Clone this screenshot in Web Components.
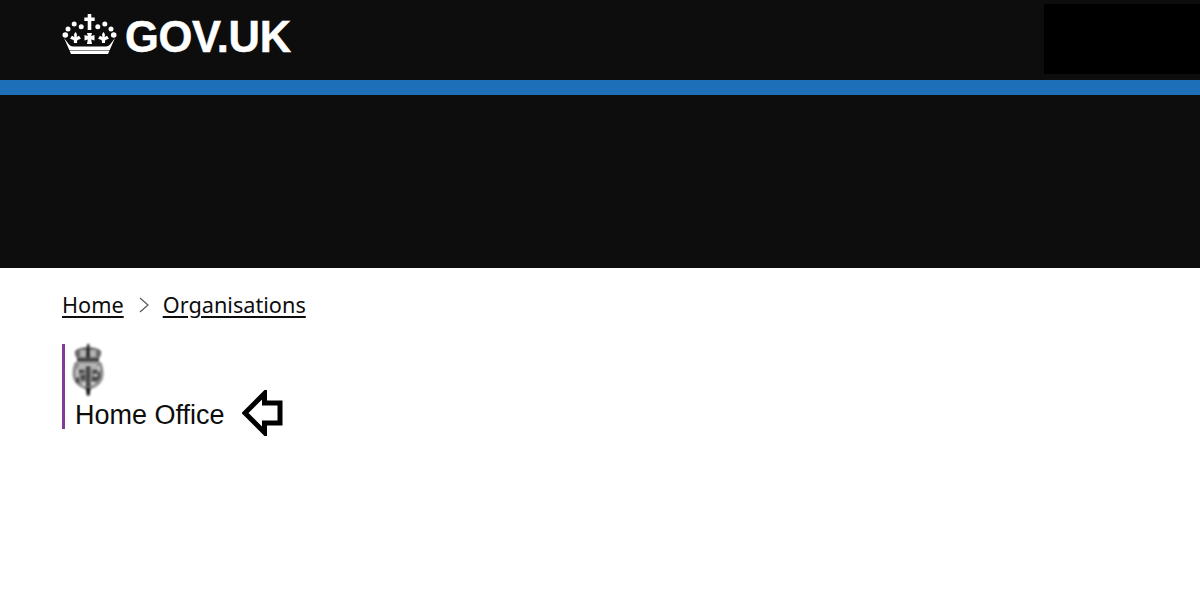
<!DOCTYPE html>
<html lang="en">
<head>
<meta charset="utf-8">
<title>Home Office - GOV.UK</title>
<style>
    html, body { margin: 0; padding: 0; background: #fff; }
</style>
</head>
<body>
<gov-header>GOV.UK</gov-header>
<gov-hero></gov-hero>
<gov-page>
    <gov-breadcrumbs>
        <a href="#">Home</a>
        <a href="#">Organisations</a>
    </gov-breadcrumbs>
    <org-logo>Home Office</org-logo>
</gov-page>

<script>
define();

function define() {
    class GovHeader extends HTMLElement {
        constructor() {
            super();
            var shadow = this.attachShadow({mode: 'open'});
            shadow.innerHTML = `
            <style>
                :host {
                    display: flex;
                    justify-content: space-between;
                    height: 80px;
                    box-sizing: border-box;
                    padding: 4px 0 6px 62px;
                    background: #0d0d0d;
                    color: #fff;
                }
                .logo { display: flex; align-items: flex-start; gap: 8px; padding-top: 10px; }
                svg { display: block; width: 55px; height: 40px; }
                .name {
                    font: bold 43.500px/46px "Liberation Sans", Arial, sans-serif;
                    letter-spacing: -0.3px;
                    -webkit-text-stroke: 0.5px #fff;
                }
                .blackout { width: 156px; background: #000; }
            </style>
            <div class="logo">
                <svg viewBox="0 0 54 40" fill="#fff" aria-hidden="true">
                    <circle cx="2.800" cy="21" r="2.800"/><circle cx="5.500" cy="15" r="2.500"/>
                    <circle cx="11.700" cy="10" r="2.500"/><circle cx="18.700" cy="12.800" r="2.500"/>
                    <circle cx="35.300" cy="12.800" r="2.500"/><circle cx="42.300" cy="10" r="2.500"/>
                    <circle cx="48.500" cy="15" r="2.500"/><circle cx="51.200" cy="21" r="2.800"/>
                    <path d="M25.200 0h3.600v3.400h3.400v3.600h-3.400v9h-3.600V7h-3.400V3.400h3.400z"/>
                    <path d="M24.500 19h5l-.8 3 3.300-1v5.500l-3.300-1 .8 4.500h-5l.8-4.500-3.300 1V21l3.300 1z"/>
                    <path d="M13 18c1.600 1.500 1.800 3.200 1 5l2.600-1.200 1.800 3-3.300 1.300c-.5.400-.7 1.500-.5 3h-3.200c.2-1.500 0-2.600-.5-3l-3.300-1.300 1.800-3 2.600 1.200c-.8-1.800-.6-3.500 1-5z"/>
                    <path d="M41 18c1.600 1.500 1.800 3.200 1 5l2.600-1.200 1.800 3-3.300 1.300c-.5.400-.7 1.500-.5 3h-3.200c.2-1.500 0-2.600-.5-3l-3.300-1.300 1.800-3 2.600 1.200c-.8-1.800-.6-3.500 1-5z"/>
                    <path d="M1.500 24l5 6.500c1 1.300 2.500 2 4 2h33c1.500 0 3-.7 4-2l5-6.500-5.300 12H6.800z"/>
                    <path d="M7 36.500h40l-1.500 3.500h-37z"/>
                </svg>
                <slot class="name"></slot>
            </div>
            <div class="blackout"></div>
            `;
        }
    }

    class GovHero extends HTMLElement {
        constructor() {
            super();
            var shadow = this.attachShadow({mode: 'open'});
            shadow.innerHTML = `
            <style>
                :host {
                    display: block;
                    height: 173px;
                    background: #0d0d0d;
                    border-top: 15px solid #1d70b8;
                }
            </style>
            `;
        }
    }

    class GovPage extends HTMLElement {
        constructor() {
            super();
            var shadow = this.attachShadow({mode: 'open'});
            shadow.innerHTML = `
            <style>
                :host {
                    display: flex;
                    flex-direction: column;
                    gap: 24px;
                    height: 332px;
                    box-sizing: border-box;
                    padding: 22px 62px 0;
                    color: #0d0d0d;
                }
            </style>
            <slot></slot>
            `;
        }
    }

    class GovBreadcrumbs extends HTMLElement {
        constructor() {
            super();
            var shadow = this.attachShadow({mode: 'open'});
            shadow.innerHTML = `
            <style>
                :host {
                    display: flex;
                    align-items: center;
                    height: 30px;
                    font: 21.700px/30px "Noto Sans", sans-serif;
                }
                nav { display: flex; align-items: center; }
                svg { display: block; width: 12px; height: 18px; margin: 0 13px 0 14px; }
                ::slotted(a) {
                    color: #0d0d0d;
                    text-decoration: underline;
                    text-decoration-thickness: 2px;
                    text-underline-offset: 3px;
                }
            </style>
            <nav>
                <slot name="first"></slot>
                <svg viewBox="0 0 12 18" fill="none" stroke="#505a5f" stroke-width="1.2" aria-hidden="true"><path d="M2 2l8 7-8 7"/></svg>
                <slot name="second"></slot>
            </nav>
            `;
            var links = this.querySelectorAll('a');
            links[0].slot = 'first';
            links[1].slot = 'second';
        }
    }

    class OrgLogo extends HTMLElement {
        constructor() {
            super();
            var shadow = this.attachShadow({mode: 'open'});
            shadow.innerHTML = `
            <style>
                :host {
                    display: flex;
                    flex-direction: column;
                    align-self: flex-start;
                    position: relative;
                    box-sizing: border-box;
                    border-left: 3px solid #823c97;
                    padding-left: 10px;
                }
                .crest { display: block; flex: none; width: 32px; height: 52px; margin-left: -3px; filter: blur(0.8px); }
                .name { display: block; padding-top: 6px; font: 27px/27px "Liberation Sans", Arial, sans-serif; }
                /* annotation drawn over the page, not part of the flow */
                .arrow { position: absolute; left: 177px; top: 46px; width: 42px; height: 46px; }
            </style>
            <svg class="crest" viewBox="0 0 32 52" aria-hidden="true">
                <path d="M15 0h2.500v4H15z" fill="#333"/>
                <path d="M3 7c3-3 9-4 13-4s10 1 13 4c1 3-1 6-3 9H6C4 13 2 10 3 7z" fill="#6a6a6a"/>
                <path d="M8 6h6v7H8zM18 6h6v7h-6z" fill="#b4b4b4"/>
                <path d="M14.500 3h3v11h-3z" fill="#2a2a2a"/>
                <path d="M5 15h22v2.500H5z" fill="#2e2e2e"/>
                <path d="M3 18h26c2 4 2.500 8 2.500 12 0 8-6 13-12 15l-3.500 2-3.500-2C7 43 .5 38 .5 30c0-4 .5-8 2.500-12z" fill="#8c8c8c"/>
                <path d="M7 20h18v1.800H7zM6 23h8v1.500H6zM19 23h7v1.500h-7z" fill="#d4d4d4"/>
                <path d="M14 22h4v21h-4zM7 26h5v3H7zM9 31h4v5H9zM21 26h4v4h-4zM20 33h6v4h-6zM4 34h3v5H4zM26 28h2v7h-2z" fill="#484848"/>
                <path d="M4 25h2.500v8H4zM26 22h2v5h-2zM10 38h4v4h-4zM19 38h4v3h-4zM22 30h3v2h-3z" fill="#cccccc"/>
                <path d="M14 44h4.500l-.8 7.500h-2.900z" fill="#111"/>
            </svg>
            <slot class="name"></slot>
            <svg class="arrow" viewBox="0 0 42 46" aria-hidden="true">
                <path d="M22.500 3.500L3 23l19.500 19.500V33H38V13H22.500z" fill="#fff" stroke="#000" stroke-width="5"/>
            </svg>
            `;
        }
    }

    customElements.define('gov-header', GovHeader);
    customElements.define('gov-hero', GovHero);
    customElements.define('gov-page', GovPage);
    customElements.define('gov-breadcrumbs', GovBreadcrumbs);
    customElements.define('org-logo', OrgLogo);
}
</script>
</body>
</html>
